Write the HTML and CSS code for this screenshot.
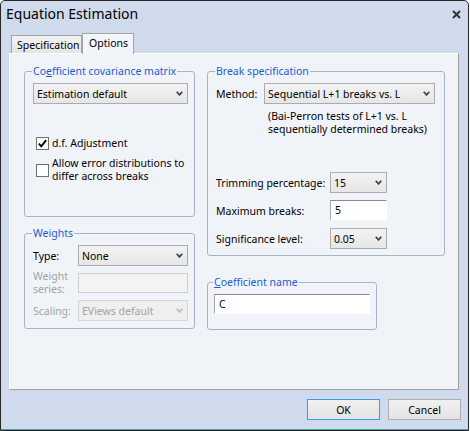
FILE: index.html
```html
<!DOCTYPE html>
<html>
<head>
<meta charset="utf-8">
<title>Equation Estimation</title>
<link rel="stylesheet" href="styles.css">
</head>
<body>
<div class="window">
  <div class="titlebar">
    <span class="title">Equation Estimation</span>
    <svg class="close" width="9" height="9" viewBox="0 0 9 9"><path d="M1 1 L8 8 M8 1 L1 8" stroke="#333" stroke-width="2" fill="none"/></svg>
  </div>
  <div class="body">
    <div class="tabs">
      <div class="tab spec">Specification</div>
      <div class="tab active">Options</div>
    </div>
    <div class="panel">
      <div class="col">
        <fieldset class="group cov">
          <legend>Co<u>e</u>fficient covariance matrix</legend>
          <div class="select cov-select"><span>Estimation default</span><svg class="arrow" width="7" height="5" viewBox="0 0 7 5"><path d="M0.7 0.7 L3.5 3.9 L6.3 0.7" stroke="#444" stroke-width="1.7" fill="none"/></svg></div>
          <div class="checks">
            <div class="check"><span class="box"><svg width="11" height="11" viewBox="0 0 11 11"><path d="M1.8 5.6 L4.3 8.3 L9.2 2.2" stroke="#000" stroke-width="1.9" fill="none"/></svg></span><span>d.f. Adjustment</span></div>
            <div class="check two"><span class="box"></span><span>Allow error distributions to<br>differ across breaks</span></div>
          </div>
        </fieldset>
        <fieldset class="group weights">
          <legend>Weights</legend>
          <div class="form wform">
            <span class="lbl">Type:</span>
            <div class="select"><span>None</span><svg class="arrow" width="7" height="5" viewBox="0 0 7 5"><path d="M0.7 0.7 L3.5 3.9 L6.3 0.7" stroke="#444" stroke-width="1.7" fill="none"/></svg></div>
            <span class="lbl dis ml">Weight<br>series:</span>
            <div class="input disabled"></div>
            <span class="lbl dis">Scaling:</span>
            <div class="select disabled"><span>EViews default</span><svg class="arrow" width="7" height="5" viewBox="0 0 7 5"><path d="M0.7 0.7 L3.5 3.9 L6.3 0.7" stroke="#bcbcbc" stroke-width="1.7" fill="none"/></svg></div>
          </div>
        </fieldset>
      </div>
      <div class="col">
        <fieldset class="group brk">
          <legend>Break specification</legend>
          <div class="form mform">
            <span class="lbl">Method:</span>
            <div class="select"><span>Sequential L+1 breaks vs. L</span><svg class="arrow" width="7" height="5" viewBox="0 0 7 5"><path d="M0.7 0.7 L3.5 3.9 L6.3 0.7" stroke="#444" stroke-width="1.7" fill="none"/></svg></div>
          </div>
          <p class="note">(Bai-Perron tests of L+1 vs. L<br>sequentially determined breaks)</p>
          <div class="form pform">
            <span class="lbl">Trimming percentage:</span>
            <div class="select"><span>15</span><svg class="arrow" width="7" height="5" viewBox="0 0 7 5"><path d="M0.7 0.7 L3.5 3.9 L6.3 0.7" stroke="#444" stroke-width="1.7" fill="none"/></svg></div>
            <span class="lbl">Maximum breaks:</span>
            <div class="input">5</div>
            <span class="lbl">Significance level:</span>
            <div class="select"><span>0.05</span><svg class="arrow" width="7" height="5" viewBox="0 0 7 5"><path d="M0.7 0.7 L3.5 3.9 L6.3 0.7" stroke="#444" stroke-width="1.7" fill="none"/></svg></div>
          </div>
        </fieldset>
        <fieldset class="group coef">
          <legend><u>C</u>oefficient name</legend>
          <div class="input coef-input">C</div>
        </fieldset>
      </div>
    </div>
    <div class="buttons">
      <button class="btn default">OK</button>
      <button class="btn">Cancel</button>
    </div>
  </div>
</div>
</body>
</html>
```
FILE: styles.css
```css
* { box-sizing: border-box; }
html, body { margin: 0; background: #ffffff; }
body {
  font-family: "Noto Sans", "Open Sans", sans-serif;
  font-size: 10.5px;
  color: #000;
}
.window {
  width: 469px;
  height: 431px;
  border: 1px solid #262626;
  border-radius: 5px 5px 0 0;
  background: #cfdbec;
  box-shadow: inset 0 -1px 0 #3ba4b6;
  display: flex;
  flex-direction: column;
}
.titlebar {
  height: 28px;
  display: flex;
  align-items: flex-start;
  justify-content: space-between;
  padding: 4px 7px 0 5px;
}
.title {
  font-size: 14px;
  line-height: 18px;
  color: #000;
}
.close { margin-top: 5px; }
.body {
  flex: 1;
  display: flex;
  flex-direction: column;
  padding: 0 9px 0 8px;
}
.tabs {
  height: 24px;
  display: flex;
  align-items: flex-end;
  padding-left: 2px;
}
.tab {
  height: 18px;
  border: 1px solid #a4a4a4;
  border-bottom: none;
  background: linear-gradient(#f3f3f3, #e4e4e4);
  line-height: 16px;
  padding: 1px 0 0 5px;
  white-space: nowrap;
}
.tab.spec { width: 71px; }
.tab.active {
  width: 52px;
  height: 21px;
  margin-bottom: -1px;
  padding-left: 6px;
  background: #f2f5fa;
  position: relative;
}
.panel {
  height: 337px;
  border: 1px solid;
  border-color: #ffffff #a0a0a0 #a0a0a0 #ffffff;
  background: #f0f4f9;
  display: grid;
  grid-template-columns: 171px 238px;
  column-gap: 12px;
  align-content: start;
  padding: 11px 0 0 14px;
}
.col { display: flex; flex-direction: column; align-items: flex-start; }
.group {
  margin: 0;
  min-width: 0;
  border: 1px solid #a8b5c8;
  border-radius: 3px;
  padding: 0 6px 0 8px;
}
.group legend {
  padding: 0 1px;
  margin-left: -1px;
  line-height: 13px;
  color: #1b5cd4;
}
.group u { text-decoration-thickness: 1px; text-underline-offset: 1px; }
.cov { width: 171px; height: 152px; }
.weights { width: 171px; height: 102px; margin-top: 10px; }
.brk { width: 238px; height: 191px; }
.coef { width: 170px; height: 54px; margin-top: 20px; padding-left: 6px; }

.select {
  height: 21px;
  border: 1px solid #acacac;
  background: linear-gradient(#f3f3f3, #e6e6e6);
  display: flex;
  align-items: center;
  justify-content: space-between;
  padding: 0 4px 0 3px;
  white-space: nowrap;
}
.select.disabled {
  border-color: #d6d6d6;
  background: #efefef;
  color: #a3a3a3;
}
.input {
  height: 20px;
  background: #ffffff;
  border: 1px solid;
  border-color: #8a8a8a #ffffff #ffffff #a6a6a6;
  padding-left: 4px;
  line-height: 18px;
}
.input.disabled {
  background: #f3f3f3;
  border-color: #cfcfcf;
}
.cov-select { margin-top: 5px; }

.checks { margin-top: 31px; display: flex; flex-direction: column; gap: 6px; }
.check {
  display: flex;
  align-items: center;
  gap: 3px;
  padding-left: 3px;
  line-height: 16px;
}
.check.two { line-height: 13px; }
.box {
  width: 13px;
  height: 13px;
  flex: none;
  border: 1px solid #6f6f6f;
  background: #ffffff;
  display: flex;
}

.form {
  display: grid;
  align-items: center;
}
.lbl { white-space: nowrap; }
.lbl.dis { color: #a3a3a3; }
.lbl.ml { line-height: 13px; }
.wform {
  margin-top: 5px;
  grid-template-columns: 45px 110px;
  grid-template-rows: 21px 20px 21px;
  row-gap: 7px;
}
.mform {
  margin-top: 5px;
  grid-template-columns: 48px 171px;
}
.note {
  margin: 6px 0 0 52px;
  line-height: 13px;
}
.pform {
  margin-top: 36px;
  grid-template-columns: 114px 57px;
  grid-template-rows: 21px 21px 21px;
  row-gap: 7px;
}
.pform .input { align-self: start; }
.coef-input { margin-top: 5px; width: 156px; }

.buttons {
  display: flex;
  justify-content: flex-end;
  gap: 8px;
  margin: 9px -2px 0 0;
}
.btn {
  width: 73px;
  height: 21px;
  margin: 0;
  padding: 0;
  font: inherit;
  color: #000;
  border: 1px solid #adadad;
  background: linear-gradient(#f1f1f1, #e3e3e3);
}
.btn.default { border-color: #3c9ae8; }
```
